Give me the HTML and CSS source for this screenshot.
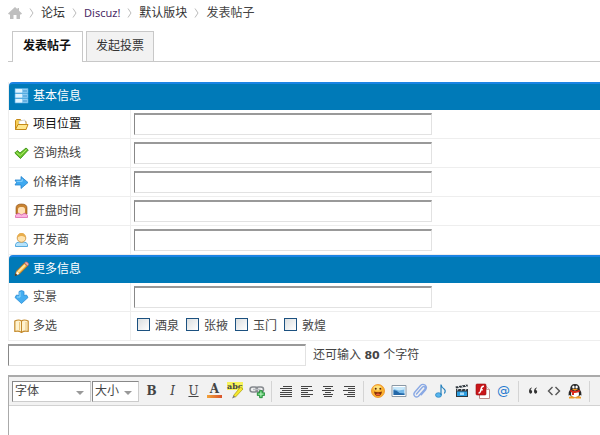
FILE: index.html
```html
<!DOCTYPE html>
<html lang="zh-CN">
<head>
<meta charset="utf-8">
<title>发表帖子</title>
<link rel="stylesheet" href="styles.css">
</head>
<body>
<nav class="crumbs">
  <a class="home" href="#" aria-label="首页"><svg width="14" height="12" viewBox="0 0 14 12"><path fill="#bfbfbf" d="M7 0 0 6.500l1 1h1V12h3.500V8h3v4H12V7.500h1l1-1-3-2.800V1H9.500v1.300z"/></svg></a>
  <svg class="sep" width="5" height="10" viewBox="0 0 5 10"><path d="M1 .5 4 5 1 9.500"/></svg>
  <a href="#">论坛</a>
  <svg class="sep" width="5" height="10" viewBox="0 0 5 10"><path d="M1 .5 4 5 1 9.500"/></svg>
  <a class="visited" href="#">Discuz!</a>
  <svg class="sep" width="5" height="10" viewBox="0 0 5 10"><path d="M1 .5 4 5 1 9.500"/></svg>
  <a href="#">默认版块</a>
  <svg class="sep" width="5" height="10" viewBox="0 0 5 10"><path d="M1 .5 4 5 1 9.500"/></svg>
  <span class="here">发表帖子</span>
</nav>
<div class="tabs">
  <a class="tab current" href="#">发表帖子</a>
  <a class="tab" href="#">发起投票</a>
</div>
<form>
<table class="fields">
  <tbody>
  <tr class="section"><th colspan="2"><div class="label"><svg width="15" height="16" viewBox="0 0 15 16"><g stroke="#5bb0e4" stroke-width=".6"><path fill="#8fcdf3" d="M1 .5h13v4.500H1zM1 5.500h13V10H1zM1 10.500h13V15H1z"/></g><path fill="#dff4ff" d="M1.500 1H8v3.500H1.500zM1.500 6H8v3.500H1.500zM1.500 11H8v3.500H1.500z"/><path stroke="#3b93cf" d="M9 3h4M9 8h4M9 13h4"/></svg>基本信息</div></th></tr>
  <tr><th><label class="label strong" for="place"><svg width="15" height="16" viewBox="0 0 15 16"><path fill="#f6ce56" stroke="#c58a17" d="M1.500 13.500v-9l1-1h4l1 2h4.500v8z"/><path fill="#fff" stroke="#bbb" stroke-width=".6" d="m5 5 6-1 1 5H5z"/><path fill="#ffe78d" stroke="#c58a17" d="m4 8.500h10l-2 5H1.500z"/></svg>项目位置</label></th><td><input class="text" id="place" type="text"></td></tr>
  <tr><th><label class="label" for="phone"><svg width="15" height="16" viewBox="0 0 15 16"><path fill="#6cc52b" stroke="#3b8e16" stroke-width=".9" d="m.8 8 2.500-2.500L6 8l6-5 2.300 2L6.500 13.500z"/><path fill="none" stroke="#b4ec72" d="m2.500 7.500 3.700 3L12.500 4.500"/></svg>咨询热线</label></th><td><input class="text" id="phone" type="text"></td></tr>
  <tr><th><label class="label" for="price"><svg width="15" height="16" viewBox="0 0 15 16"><path fill="#3fa9f0" stroke="#2383ce" stroke-width=".8" stroke-linejoin="round" d="M1 6h6V2.500L14 8.500l-7 6V11H1l1.500-2.500z"/><path stroke="#8cd3fc" d="M2.500 7.300h5.700V5"  fill="none"/></svg>价格详情</label></th><td><input class="text" id="price" type="text"></td></tr>
  <tr><th><label class="label" for="opening"><svg width="15" height="16" viewBox="0 0 15 16"><path fill="#c98431" stroke="#8a4a12" stroke-width=".6" d="M2 11V5q0-4 5.500-4T13 5v6z"/><rect x="4" y="4" width="7" height="7" rx="2.500" fill="#ffe1b5"/><path fill="#fbb3df" stroke="#dc67b0" stroke-width=".8" d="M1.500 14.500v-2q.5-2 3.500-2l2.500 1.500 2.500-1.500q3 0 3.500 2v2z"/></svg>开盘时间</label></th><td><input class="text" id="opening" type="text"></td></tr>
  <tr><th><label class="label" for="developer"><svg width="15" height="16" viewBox="0 0 15 16"><path fill="#b5e2fb" stroke="#4aa3da" stroke-width=".9" d="M1.500 14.500v-2q.5-2.500 4-2.500h4q3.500 0 4 2.500v2z"/><circle cx="7.500" cy="6" r="4.300" fill="#ffe3ae" stroke="#c98b35" stroke-width=".8"/><path fill="#e8ad4c" d="M3.300 5.500q.2-4.500 4.200-4.500t4.200 4.500Q9 3.500 7.500 4 6 3.500 3.300 5.500"/></svg>开发商</label></th><td><input class="text" id="developer" type="text"></td></tr>
  </tbody>
  <tbody>
  <tr class="section"><th colspan="2"><div class="label"><svg width="15" height="16" viewBox="0 0 15 16"><path fill="#f5b53c" stroke="#a65a16" stroke-width=".7" d="M1 14.500 2.500 10 10.500 2l3 3-8 8z"/><path stroke="#ffe6a0" stroke-width="1.800" d="m4 11 7-7"/><path fill="#f0b0b0" stroke="#b95454" stroke-width=".6" d="m10.500 2 1.200-1.200q2.800.2 3 3L13.500 5z"/><path fill="#fff" d="m2.700 10.300 2.600 2.600-3 1z"/><path fill="#222" d="m1 14.800.7-2.200 1.500 1.500z"/></svg>更多信息</div></th></tr>
  <tr><th><label class="label" for="scene"><svg width="15" height="16" viewBox="0 0 15 16"><path fill="#45aef1" stroke="#2a8dd5" stroke-width=".8" stroke-linejoin="round" d="M5 2.500 7.500 1.500 10 2.500v4l2.500-.5 1.500 2.500-6.500 6L1 8.500 2.500 6l2.500.5z"/><path fill="none" stroke="#93d8fc" d="M6 3v5H3"/></svg>实景</label></th><td><input class="text" id="scene" type="text"></td></tr>
  <tr><th><div class="label" id="multi"><svg width="15" height="16" viewBox="0 0 15 16"><path fill="#fff3cf" stroke="#c48a2c" stroke-width="1.200" stroke-linejoin="round" d="M.8 3Q5 1 7.500 3 10 1 14.200 3v10.500q-4-1-6.700 1-2.700-2-6.700-1z"/><path stroke="#c48a2c" d="M7.500 3v11"/><path stroke="#ecc77e" d="M5.500 4v8M12 4v8"/></svg>多选</div></th><td>
    <div class="checks" role="group" aria-labelledby="multi">
      <label><input type="checkbox">酒泉</label>
      <label><input type="checkbox">张掖</label>
      <label><input type="checkbox">玉门</label>
      <label><input type="checkbox">敦煌</label>
    </div></td></tr>
  </tbody>
</table>
<div class="subject">
  <input class="text" type="text" aria-label="标题">
  <span>还可输入 <strong>80</strong> 个字符</span>
</div>
<div class="editor">
  <div class="toolbar">
    <div class="picker font"><select aria-label="字体"><option>字体</option></select></div>
    <div class="picker size"><select aria-label="大小"><option>大小</option></select></div>
    <div class="group">
      <button type="button" class="letter bold">B</button>
      <button type="button" class="letter italic">I</button>
      <button type="button" class="letter underline">U</button>
      <button type="button" class="letter color">A</button>
      <button type="button" class="marker" aria-label="背景色"><span>abc</span><svg width="16" height="16" viewBox="0 0 16 16"><path fill="#f5e72c" stroke="#a89c10" stroke-width=".7" d="m5.500 12.500 7-8.500 2.500 2-7.500 8z"/><path fill="#777" d="m5.500 12.500 2 1.500L4 15.500z"/></svg></button>
      <button type="button" aria-label="添加链接"><svg width="16" height="16" viewBox="0 0 16 16"><g fill="none" stroke="#85898e" stroke-width="1.500"><rect x="1" y="4" width="7.500" height="5" rx="2.500"/><rect x="7" y="4" width="7.500" height="5" rx="2.500"/></g><path stroke="#b9bdc2" stroke-width="1.500" d="M4 6.500h7.500"/><path fill="#35b34a" stroke="#16832c" stroke-width=".7" d="M10.500 7.500h2.800v2.200h2.200v2.800h-2.200v2.200h-2.800v-2.200H8.300V9.700h2.200z"/><path stroke="#c2f3c7" d="M11.900 8.500v5.200M9.300 11.100h5.200"/></svg></button>
    </div>
    <div class="group">
      <button type="button" aria-label="自动排版"><svg class="lines" width="12" height="12" viewBox="0 0 12 12"><path d="M3 1.500h9M0 3.500h12M2 5.500h10M0 7.500h12M0 9.500h12M0 11.500h12"/></svg></button>
      <button type="button" aria-label="左对齐"><svg class="lines" width="12" height="12" viewBox="0 0 12 12"><path d="M0 1.500h11M0 3.500h7M0 5.500h12M0 7.500h7M0 9.500h12M0 11.500h9"/></svg></button>
      <button type="button" aria-label="居中"><svg class="lines" width="12" height="12" viewBox="0 0 12 12"><path d="M1 1.500h10M3 3.500h6M0 5.500h12M3 7.500h6M1 9.500h10M2 11.500h8"/></svg></button>
      <button type="button" aria-label="右对齐"><svg class="lines" width="12" height="12" viewBox="0 0 12 12"><path d="M1 1.500h11M5 3.500h7M0 5.500h12M5 7.500h7M1 9.500h11M4 11.500h8"/></svg></button>
    </div>
    <div class="group">
      <button type="button" aria-label="表情"><svg width="16" height="16" viewBox="0 0 16 16"><circle cx="8" cy="8" r="6.500" fill="#fbb32f" stroke="#ef8b1d" stroke-width=".8"/><ellipse cx="7.500" cy="5" rx="4" ry="2.500" fill="#ffe17a"/><path fill="#8a3208" d="M4 8.500q4 1.300 8 0-.7 4.500-4 4.500t-4-4.500"/><path fill="#f25d3c" d="M5.700 11.200q2.300-1.500 4.600 0-2.300 2.400-4.600 0"/><circle cx="5.700" cy="5.700" r="1" fill="#5c2505"/><circle cx="10.300" cy="5.700" r="1" fill="#5c2505"/></svg></button>
      <button type="button" aria-label="图片"><svg width="16" height="16" viewBox="0 0 16 16"><path fill="#fff" stroke="#8b98a5" d="M1 2.500h14v11H1z"/><path fill="#75b8e8" d="M2.500 4h11v8h-11z"/><path fill="#c8e8fa" d="M2.500 4h11v2.500L8 7.500 2.500 6z"/><path fill="#2468a8" d="m2.500 7 3 .8 3 2.200 5 .5V12h-11z"/></svg></button>
      <button type="button" aria-label="附件"><svg width="16" height="16" viewBox="0 0 16 16"><path fill="none" stroke="#8aa9e4" stroke-width="1.400" stroke-linecap="round" d="m4.500 11 6-7q1.500-1 2.300 0t0 2.200l-6.300 7q-2 1.500-3.700 0t-.3-3.700l6-7q2-2 4.500-.5 2.300 2 .8 4.500l-4.500 5.300"/></svg></button>
      <button type="button" aria-label="音乐"><svg width="16" height="16" viewBox="0 0 16 16"><ellipse cx="5.500" cy="12" rx="3" ry="2.300" fill="#57b5ed" stroke="#2580bd" stroke-width=".7"/><path fill="none" stroke="#2580bd" stroke-width="1.200" d="M8 12V1.500q.5 3 2.800 4.200 2.500 1.800.5 4.800"/></svg></button>
      <button type="button" aria-label="视频"><svg width="16" height="16" viewBox="0 0 16 16"><path fill="#30373d" d="M2 6h12v8H2zM1.500 3.500 13.500 1.500l.4 2L2 5.500z"/><path stroke="#e8eef2" d="m4 3 1.500 2m2-2.600L9 4.500m2-2.700 1.500 2M4 6 3.300 7.500M8 6 7.300 7.500M12 6l-.7 1.500"/><path fill="#2b9de0" d="M3 8.500h10V13H3z"/><path fill="#a6dcfb" d="M6 9.500h4V12H6z"/></svg></button>
      <button type="button" aria-label="Flash"><svg width="16" height="16" viewBox="0 0 16 16"><path fill="#fff" stroke="#bc8a87" d="M4.500 3.500h7l3 3v9h-10z"/><path fill="#eee" stroke="#bc8a87" stroke-width=".7" d="M11.500 3.500v3h3"/><rect x="1" y="1" width="10" height="11" rx="1" fill="#c91519" stroke="#940e10" stroke-width=".6"/><path fill="none" stroke="#fff" stroke-width="1.500" d="M9 3.300Q6.500 3 6 6.500T3.500 10M5.200 6.700h2.600"/></svg></button>
      <button type="button" class="letter at">@</button>
    </div>
    <div class="group">
      <button type="button" aria-label="引用"><svg width="16" height="16" viewBox="0 0 16 16"><path fill="#333" d="M7 5Q5.500 5.500 5.700 7q1.500.2 1.500 1.800T5.600 10.700Q4 10.700 4 8.300 4 5.300 7 4.500zm5 0q-1.500.5-1.300 2 1.500.2 1.500 1.800t-1.600 1.900Q9 10.700 9 8.300q0-3 3-3.800z"/></svg></button>
      <button type="button" aria-label="代码"><svg width="16" height="16" viewBox="0 0 16 16"><path fill="none" stroke="#555" stroke-width="1.400" d="M6.500 4 2.500 8l4 4m3-8 4 4-4 4"/></svg></button>
      <button type="button" aria-label="QQ"><svg width="16" height="16" viewBox="0 0 16 16"><path fill="#272727" d="M8 1q4.800 0 4.800 5.500Q15 9 14.500 12.500L13 12q-1 2.500-5 2.500T3 12l-1.500.5Q1 9 3.200 6.500 3.200 1 8 1"/><ellipse cx="8" cy="11" rx="4" ry="3.200" fill="#fff"/><ellipse cx="6.400" cy="4" rx="1.200" ry="1.600" fill="#fff"/><ellipse cx="9.600" cy="4" rx="1.200" ry="1.600" fill="#fff"/><path fill="#f39a20" d="M4.800 6.300q3.200-1.300 6.400 0-3.200 2.200-6.400 0M2 14q2-1.500 5.500 0v1.500H2zM8.500 14q3.500-1.500 5.500 0v1.500H8.500z"/><path fill="none" stroke="#dc2b1d" stroke-width="2" d="M3.300 7.500Q8 10.300 12.700 7.500M6 9v3"/></svg></button>
    </div>
  </div>
  <textarea aria-label="内容"></textarea>
</div>
</form>
</body>
</html>
```
FILE: styles.css
```css
* {
  box-sizing: border-box;
}

body {
  display: flex;
  flex-direction: column;
  min-height: 100vh;
  margin: 0 0 0 8px;
  overflow-x: hidden;
  background: #fff;
  color: #444;
  font: 12px/18px "DejaVu Sans Condensed", "Noto Sans CJK SC", sans-serif;
}

form {
  display: flex;
  flex: 1;
  flex-direction: column;
}

a {
  color: #333;
  text-decoration: none;
}

svg {
  display: block;
  flex: none;
}

input,
select,
button,
textarea {
  margin: 0;
  font: inherit;
  color: inherit;
}

/* breadcrumb */
.crumbs {
  display: flex;
  align-items: center;
  gap: 7px;
  height: 26px;
}

.sep {
  fill: none;
  stroke: #bbb;
}

.crumbs .visited {
  color: #4b2a66;
  font-family: "Noto Sans", sans-serif;
  font-size: 11px;
}

/* tabs */
.tabs {
  display: flex;
  gap: 3px;
  margin-top: 5px;
  padding-left: 4px;
  border-bottom: 1px solid #c8c8c8;
}

.tab {
  padding: 5px 9px 6px;
  border: 1px solid #c8c8c8;
  border-bottom: 0;
  background: #f2f2f2;
}

.tab.current {
  margin-bottom: -1px;
  padding: 5px 11px 7px 10px;
  background: #fff;
  color: #111;
  font-weight: bold;
}

/* field table */
.fields {
  width: 100%;
  margin-top: 20px;
  border-spacing: 0;
  border-left: 1px solid #eee;
}

.fields th,
.fields td {
  height: 29px;
  padding: 0 3px;
  border-bottom: 1px solid #eee;
  text-align: left;
  font-weight: normal;
}

.fields th {
  width: 122px;
  padding-left: 5px;
  border-right: 1px solid #eee;
}

.fields .section th {
  height: 28px;
  padding-bottom: 2px;
  border: 0;
  border-top: 2px solid #1b84e4;
  border-top-left-radius: 4px;
  background: #007ab8;
  color: #fff;
}

.label {
  display: flex;
  align-items: center;
  gap: 4px;
}

.strong {
  color: #111;
}

.text {
  display: block;
  width: 298px;
  height: 22px;
  padding: 1px 4px;
  border: 1px solid #e2e2e2;
  border-top: 2px solid #999;
  border-left-color: #888;
  background: #fff;
}

.checks {
  display: flex;
  gap: 7px;
  padding-left: 3px;
}

.checks label {
  display: flex;
  align-items: center;
  gap: 5px;
}

.checks input {
  appearance: none;
  width: 13px;
  height: 13px;
  margin-bottom: 3px;
  border: 1px solid #1c5180;
  background: linear-gradient(135deg, #dcdfe0, #fff);
}

/* subject line */
.subject {
  display: flex;
  align-items: center;
  gap: 7px;
  padding: 3px 0 9px;
}

.subject strong {
  font-family: "DejaVu Sans", sans-serif;
  font-size: 11px;
}

/* editor */
.editor {
  display: flex;
  flex: 1;
  flex-direction: column;
  border-top: 2px solid #aaa;
  border-left: 1px solid #aaa;
}

.toolbar {
  display: flex;
  align-items: center;
  height: 29px;
  padding-left: 3px;
  border-bottom: 1px solid #d2d2d2;
  background: #f2f2f2;
}

.picker {
  position: relative;
  flex: none;
  height: 21px;
  margin-right: 1px;
  border: 1px solid #ccc;
  border-top-color: #888;
  border-left-color: #888;
  background: #fff;
}

.font {
  width: 79px;
}

.size {
  width: 47px;
}

.picker select {
  display: block;
  appearance: none;
  width: 100%;
  height: 17px;
  padding: 0 2px;
  border: 0;
  background: none;
}

.picker::after {
  content: "";
  position: absolute;
  top: 9px;
  right: 6px;
  border: 4px solid transparent;
  border-top-color: #999;
  border-bottom: 0;
  pointer-events: none;
}

.group {
  display: flex;
  flex: none;
  padding: 0 4px 0 3px;
  border-right: 1px solid #d4d4d4;
}

.picker + .group {
  padding-left: 1px;
}

.group button {
  display: flex;
  align-items: center;
  justify-content: center;
  width: 21px;
  height: 21px;
  padding: 0;
  border: 0;
  background: none;
}

.group .letter {
  color: #444;
  font: 12px/16px "DejaVu Serif", serif;
}

.group .bold {
  font-weight: bold;
}

.group .italic {
  font-style: italic;
}

.group .underline {
  text-decoration: underline;
}

.group .color {
  flex-direction: column;
  font-weight: bold;
  line-height: 11px;
}

.color::after {
  content: "";
  width: 15px;
  height: 3px;
  background: linear-gradient(90deg, #f2a33a, #d9532c);
}

.group .at {
  color: #1d78cf;
  font: 13px/16px "DejaVu Sans", sans-serif;
}

.group .marker {
  position: relative;
}

.marker span {
  position: absolute;
  top: 1px;
  left: 2px;
  background: #f7f35a;
  font: bold 8px/8px "DejaVu Serif", serif;
}

.marker svg {
  position: relative;
}

.lines {
  stroke: #444;
}

textarea {
  display: block;
  flex: 1;
  width: 100%;
  height: 24px;
  border: 0;
  resize: none;
}
```
